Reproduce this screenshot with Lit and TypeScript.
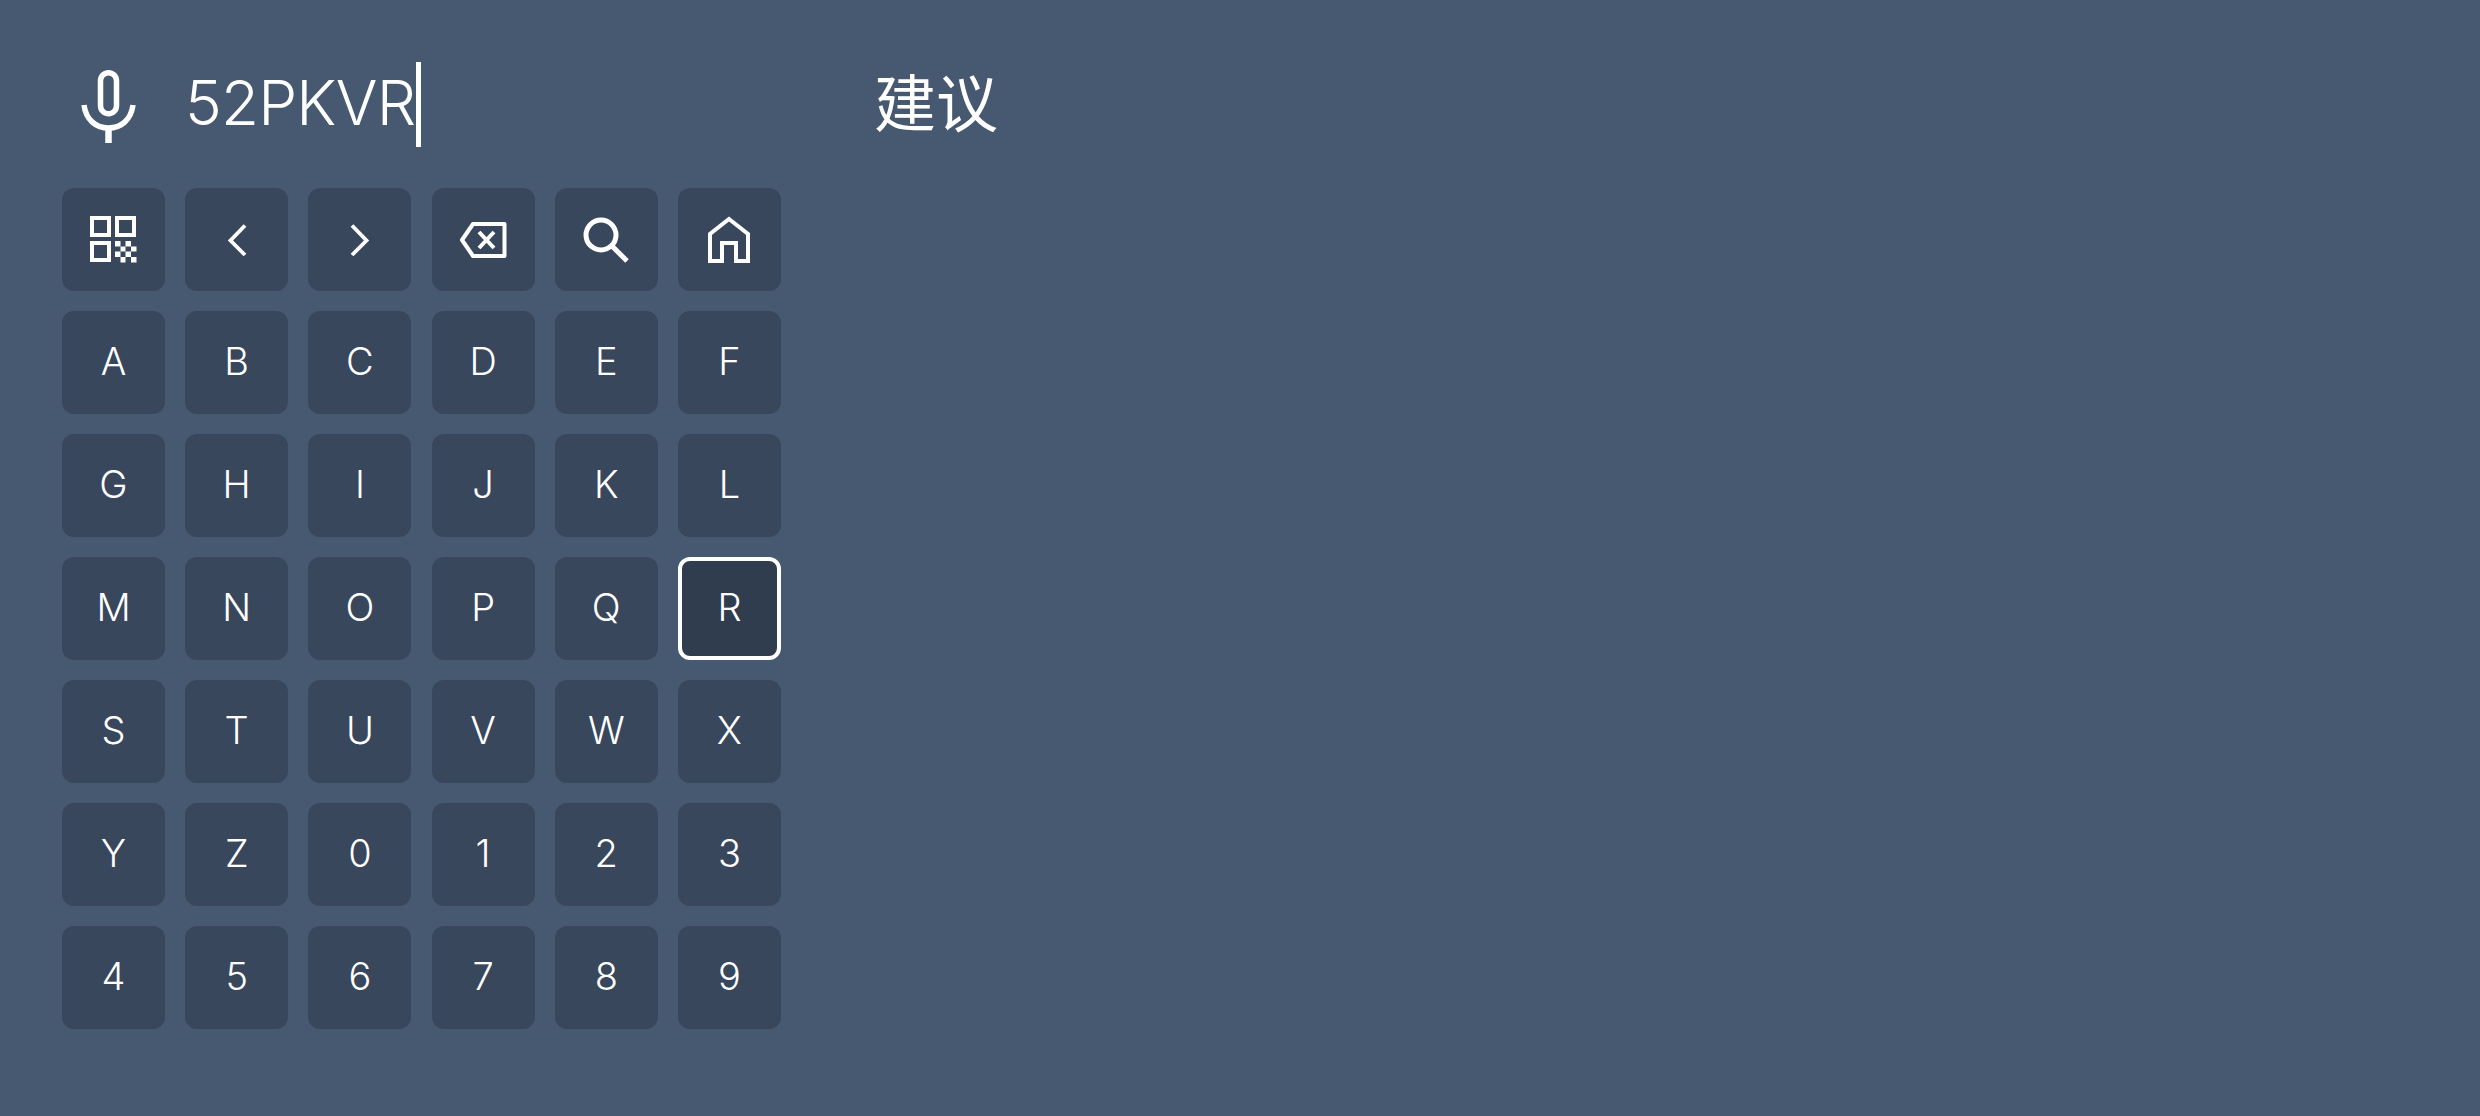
import { LitElement, html, css, svg } from "lit";
import { customElement } from "lit/decorators.js";

const icons: Record<string, unknown> = {
  qr: svg`<svg class="ic" viewBox="0 0 47 47" width="47" height="47" fill="none" stroke="#fff" stroke-width="4">
    <rect x="2" y="2" width="17" height="17"/><rect x="27" y="2" width="17" height="17"/><rect x="2" y="27" width="17" height="17"/>
    <g fill="#fff" stroke="none"><rect x="25" y="25" width="5.5" height="5.5"/><rect x="35.5" y="25" width="5.5" height="5.5"/><rect x="30.5" y="30.5" width="5" height="5"/><rect x="41" y="30.5" width="5.5" height="5"/><rect x="25" y="35.5" width="5.5" height="5.5"/><rect x="35.5" y="35.5" width="5.5" height="5.5"/><rect x="30.5" y="41" width="5" height="5.5"/><rect x="41" y="41" width="5.5" height="5.5"/></g></svg>`,
  left: svg`<svg class="ic" viewBox="0 0 48 48" width="48" height="48" fill="none" stroke="#fff" stroke-width="3.8"><path d="M32 9.5 L17.5 24.5 L32 39"/></svg>`,
  right: svg`<svg class="ic" viewBox="0 0 48 48" width="48" height="48" fill="none" stroke="#fff" stroke-width="3.8"><path d="M16 9.5 L30.5 24.5 L16 39"/></svg>`,
  back: svg`<svg class="ic" viewBox="0 0 48 48" width="48" height="48" fill="none" stroke="#fff" stroke-width="4" stroke-linejoin="round"><path d="M14 8 H45.5 V40 H14 L3 24 Z"/><path d="M20 16 L35 32 M35 16 L20 32"/></svg>`,
  search: svg`<svg class="ic" viewBox="0 0 48 48" width="48" height="48" fill="none" stroke="#fff" stroke-width="5"><circle cx="19" cy="19" r="15"/><path d="M30 30 L45 45"/></svg>`,
  home: svg`<svg class="ic" viewBox="0 0 48 48" width="48" height="48" fill="none" stroke="#fff" stroke-width="4"><path d="M24 3 L43 18 V45 H31 V27 H17 V45 H5 V18 Z"/></svg>`,
};

const rows = ["ABCDEF", "GHIJKL", "MNOPQR", "STUVWX", "YZ0123", "456789"];

@customElement("app-root")
export class AppRoot extends LitElement {
  static styles = css`
    :host { display: block; width: 2480px; height: 1116px; background: #475970; color: #fff; overflow: hidden;
      font-family: Inter, "Noto Sans CJK SC", sans-serif; }
    .page { display: flex; padding: 62px 0 0 62px; box-sizing: border-box; height: 100%; }
    .left { width: 812px; flex: none; }
    .search { display: flex; align-items: center; height: 85px; margin-bottom: 41px; }
    .mic { margin: 4px 0 0 19px; width: 55px; height: 73px; flex: none; }
    .input { margin-left: 49px; font-size: 62px; line-height: 82px; font-weight: 350; letter-spacing: -0.8px; display: flex; height: 85px; }
    .caret { width: 5px; height: 85px; background: #fff; margin-left: 1px; }
    .grid { display: grid; grid-template-columns: repeat(6, 103px); grid-auto-rows: 103px; gap: 20px 20.2px; }
    .key { background: #38475c; border-radius: 12px; display: flex; align-items: center; justify-content: center;
      font-size: 38px; font-weight: 350; box-sizing: border-box; padding-bottom: 3px; }
    .key.icon { padding-bottom: 0; }
    .key.focus { background: #303d4e; border: 4px solid #fff; }
    .suggest { font-size: 62px; line-height: 77px; font-weight: 400; font-family: "Noto Sans CJK SC", sans-serif; height: 85px; }
  `;

  render() {
    return html`<div class="page">
      <div class="left">
        <div class="search">
          <svg class="mic" viewBox="0 0 55 73" fill="none" stroke="#fff" stroke-width="5.5">
            <rect x="19.5" y="2.7" width="16" height="41" rx="8"/>
            <path d="M3 35 C5 50 15 58 27.5 58 C40 58 50 50 52 35"/>
            <path d="M27.5 58 V73" stroke-width="6.5"/>
          </svg>
          <div class="input"><span>52PKVR</span><span class="caret"></span></div>
        </div>
        <div class="grid">
          ${["qr", "left", "right", "back", "search", "home"].map((k) => html`<div class="key icon">${icons[k]}</div>`)}
          ${rows.map((r) => [...r].map((c) => html`<div class="key ${c === "R" ? "focus" : ""}">${c}</div>`))}
        </div>
      </div>
      <div class="suggest">建议</div>
    </div>`;
  }
}
